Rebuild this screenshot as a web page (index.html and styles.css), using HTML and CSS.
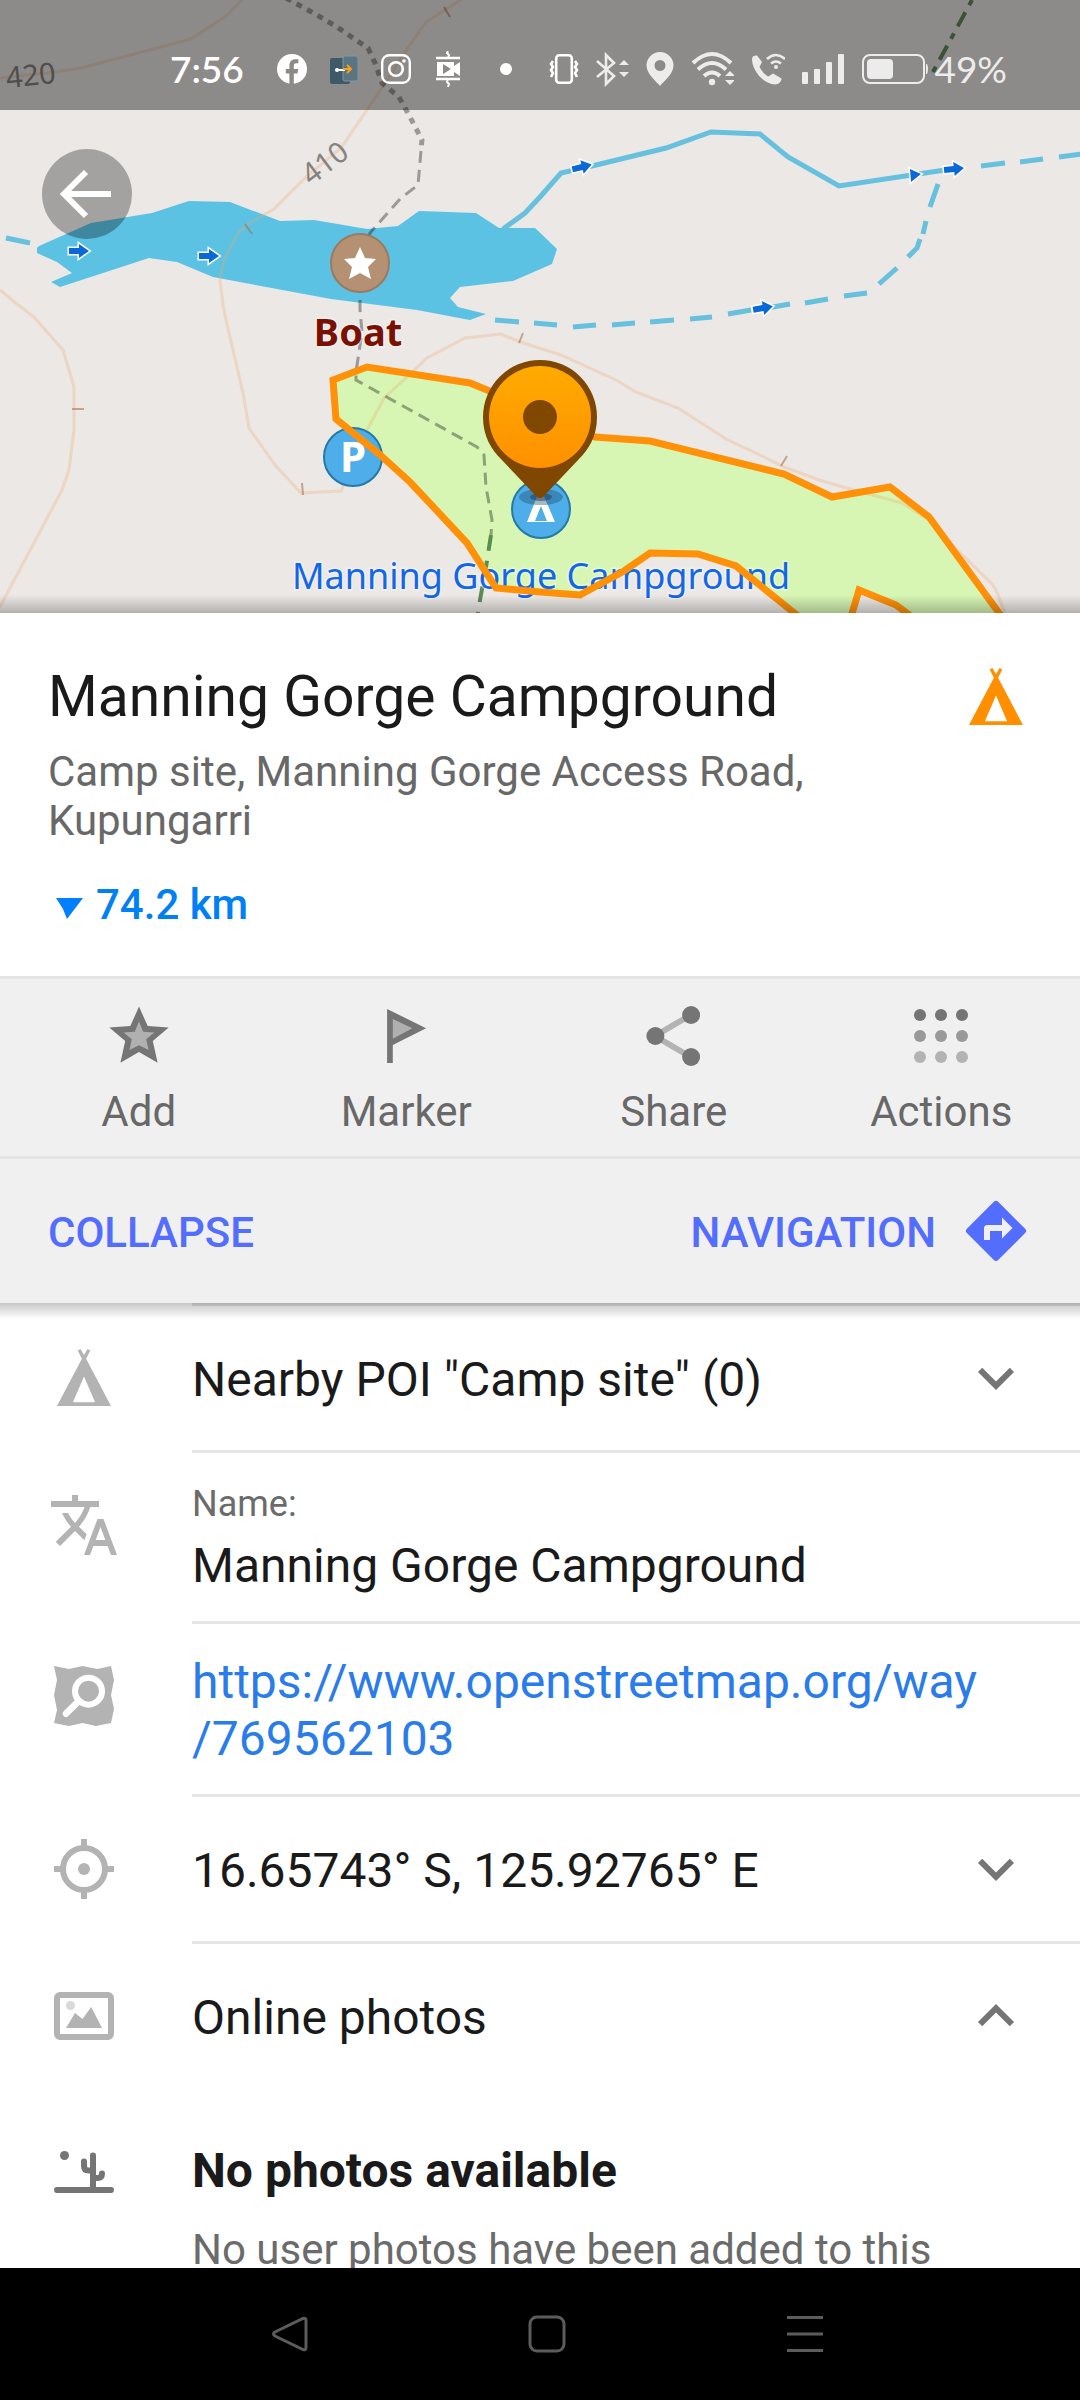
FILE: index.html
```html
<!DOCTYPE html>
<html lang="en">
<head>
<meta charset="utf-8">
<meta name="viewport" content="width=device-width, initial-scale=1">
<title>Manning Gorge Campground</title>
<link rel="stylesheet" href="styles.css">
</head>
<body>
<svg class="defs" aria-hidden="true">
  <defs>
    <symbol id="tent" viewBox="0 0 24 24"><path fill-rule="evenodd" d="M10.8 2.3 12 4.3l1.2-2 .9.5-1.4 2.8L21 21.3H3l8.3-15.7-1.4-2.8zM12 11.5 8.3 20.1h7.4z"/></symbol>
    <symbol id="chevron-down" viewBox="0 0 24 24"><path d="M7.41 8.59 12 13.17l4.59-4.58L18 10l-6 6-6-6z"/></symbol>
    <symbol id="chevron-up" viewBox="0 0 24 24"><path d="M7.41 15.41 12 10.83l4.59 4.58L18 14l-6-6-6 6z"/></symbol>
    <symbol id="flow" viewBox="-13 -9 26 18" overflow="visible"><path class="flow-arrow" d="M-10-3H0v-4L10 0 0 7V3h-10z"/></symbol>
  </defs>
</svg>

<div class="app">
  <header class="map">
    <svg class="map-canvas" viewBox="0 0 1080 613" preserveAspectRatio="xMidYMid slice" role="img" aria-label="Map around Manning Gorge Campground">
      <defs>
        <linearGradient id="pin-fill" x1="0" y1="0" x2="0" y2="1">
          <stop offset="0" stop-color="#ffab00"/><stop offset="1" stop-color="#ff9000"/>
        </linearGradient>
      </defs>
      <rect class="land" width="1080" height="613"/>
      <path class="camp-area" d="M333 380 367 367 470 383 540 412 595 437 650 441 784 474 832 497 890 487 929 517 1000 613V640H920L908 613 896 605 859 590 852 613 846 640H830L798 613 736 566 698 554 650 553 624 571 580 595 540 592 496 588 467 543 410 482 379 454 336 419z"/>
      <path class="lake" d="M37 253 37 248 39 246 91 223 152 213 189 201 230 202 280 221 314 220 367 229 398 226 419 211 476 213 499 228 535 228 557 249 552 264 513 281 460 287 450 298 458 307 486 314 470 320 417 310 331 299 213 277 177 262 149 258 60 287 51 282 72 273 57 262z"/>
      <g class="river">
        <path d="M6 238 30 243"/>
        <path d="M503 229 525 213 540 197 561 173 592 166 666 148 711 132 760 134 788 157 839 186 945 170"/>
        <path d="M981 166 1005 163M1020 162 1043 159M1059 157 1082 154"/>
        <path d="M938 184 930 207M926 221 923 234M920 239 917 248 908 257M897 268 879 284"/>
        <path d="M867 293 844 296M828 299 805 303M790 304 767 308M751 310 728 314M712 317 690 319M674 320 650 322M635 323 612 325M596 325 573 327M557 325 534 323M519 322 495 320"/>
      </g>
      <g class="contour">
        <path d="M0 78 55 72 81 68 134 54 191 39 226 16 242 0"/>
        <path d="M461 0 448 8 426 22 403 55 382 88 341 148 306 177 274 209 248 224 238 233 224 260 220 280 223 305 226 320 243 393 249 428 275 465 301 493 341 491 368 428 384 398 406 378 427 358 465 338 501 334 520 342 561 355 616 380 636 392 678 408 726 439 764 457 784 467 819 480 850 489 902 503 929 520 950 543 991 583 996 590 1005 613"/>
        <path d="M0 290 12 300 34 317 63 350 74 387 74 430 69 470 62 490 0 607"/>
      </g>
      <path class="contour-tick" d="M444 7 450 17M245 224 252 234M302 483 303 495M72 409H84M523 333 519 343M787 456 781 466"/>
      <path class="trail trail-dots" d="M286-2 317 15 337 27 356 40 368 48 375 63 382 83 399 97 410 117 422 140 421 148"/>
      <path class="trail" d="M421 151 418 185 401 198 370 233 360 263 360 310 362 332 356 372 356 380 477 447 484 455 486 487 492 520 491 535"/>
      <path class="track" d="M491 535 486 567 480 600 478 613" stroke-dasharray="16 10"/>
      <path class="track" d="M972 0 933 72" stroke-dasharray="6 8 16 8"/>
      <g class="contour-label">
        <text transform="translate(7 88) rotate(-6)">420</text>
        <text transform="translate(311 186) rotate(-37)">410</text>
      </g>
      <use href="#flow" x="-13" y="-9" width="26" height="18" transform="translate(79 251)"/>
      <use href="#flow" x="-13" y="-9" width="26" height="18" transform="translate(209 256)"/>
      <use href="#flow" x="-13" y="-9" width="26" height="18" transform="translate(582 167) rotate(-14)"/>
      <path class="flow-arrow" d="M910 169 921 174 911 182z"/>
      <use href="#flow" x="-13" y="-9" width="26" height="18" transform="translate(954 169) rotate(-6)"/>
      <use href="#flow" x="-13" y="-9" width="26" height="18" transform="translate(763 308) rotate(-10)"/>

      <circle class="poi-brown" cx="360" cy="263" r="29"/>
      <path fill="#fff" d="M360 247 365 258 376 259 368 267 371 279 360 273 349 279 352 267 344 259 355 258z"/>
      <text class="map-label label-boat" x="358" y="346">Boat</text>
      <circle class="poi-blue" cx="353" cy="457" r="29"/>
      <text class="label-parking" x="353" y="472">P</text>
      <circle class="poi-blue" cx="541" cy="509" r="29"/>
      <path fill="#fff" fill-rule="evenodd" d="M538 494H543L555 522H527zM541 506 535 521H547z"/>
      <text class="map-label label-camp" x="541" y="589">Manning Gorge Campground</text>
      <path class="camp-outline" d="M798 616 736 566 698 554 650 553 624 571 580 595 540 592 496 588 467 543 410 482 379 454 336 419 333 380 367 367 470 383 540 412 595 437 650 441 784 474 832 497 890 487 929 517 1002 617M851 617 859 590 896 605 912 617"/>
      <ellipse cx="541" cy="497" rx="22" ry="8" fill="#1d4c68" opacity=".4"/>
      <ellipse cx="541" cy="497" rx="11" ry="4" fill="#1d3c58" opacity=".5"/>
      <path fill="#804700" d="M540 360a57 57 0 0 1 57 57c0 20-9 33-18 42l-36 38q-3 2-6 0l-36-38c-9-9-18-22-18-42a57 57 0 0 1 57-57z"/>
      <circle cx="540" cy="417" r="51" fill="url(#pin-fill)"/>
      <circle cx="540" cy="417" r="17" fill="#804700"/>
    </svg>

    <div class="status">
      <span class="clock">7:56</span>
      <div class="notices">
        <svg width="30" height="36" viewBox="0 0 30 36"><circle cx="15" cy="18" r="15" fill="#fff"/><path d="M12.4 33V22.5H8.8V18h3.6v-3.2c0-4.4 2.4-6.5 6-6.5h3v4h-2.1c-1.7 0-2.5.8-2.5 2.5V18h4.4l-.7 4.5h-3.7V33z" fill="#8b8a87"/></svg>
        <svg width="30" height="36" viewBox="0 0 30 36"><rect x="1" y="7" width="20" height="26" rx="2" fill="#3e5a69"/><rect x="14" y="5" width="15" height="25" rx="2" fill="#5b7482" stroke="#7f98a5"/><path d="M8 19h8" stroke="#fff" stroke-width="2"/><circle cx="8" cy="19" r="2" fill="#fff"/><path d="M14 18h8m-4-4 4 4-4 4" fill="none" stroke="#f5a21b" stroke-width="2"/></svg>
        <svg width="30" height="36" viewBox="0 0 30 36" fill="none" stroke="#fff"><rect x="1.2" y="4.2" width="27.6" height="27.6" rx="7" stroke-width="2.4"/><circle cx="15" cy="18" r="6.8" stroke-width="2.6"/><circle cx="23" cy="10" r="1.8" fill="#fff" stroke="none"/></svg>
        <svg width="30" height="36" viewBox="0 0 30 36"><path d="M3 7h24M3 28h24" stroke="#fff" stroke-width="2.4"/><path d="m15 0-1 2 2 2-1 3M15 28l-1 3 2 2-1 3" fill="none" stroke="#fff" stroke-width="2"/><path fill="#fff" fill-rule="evenodd" d="M4 11h17v4l6-4v14l-6-4v4H4zm6 2v10l8-5z"/></svg>
        <svg width="30" height="36" viewBox="0 0 30 36"><circle cx="21" cy="18" r="6" fill="#fff"/></svg>
      </div>
      <div class="signals">
        <svg width="31" height="36" viewBox="0 0 31 36" fill="none" stroke="#fff"><rect x="8.2" y="4.2" width="15.600" height="27.600" rx="3" stroke-width="2.600"/><path d="m5 10-2 3 2 3-2 3 2 3-2 4M27 10l2 3-2 3 2 3-2 3 2 4" stroke-width="2.600"/></svg>
        <svg width="33" height="36" viewBox="0 0 33 36"><path d="m1 10 17 15-8 8V4l8 8L1 26" fill="none" stroke="#ececec" stroke-width="2.600"/><path d="m23 14 5-5 5 5zM23 21l5 5 5-5z" fill="#ececec"/></svg>
        <svg width="28" height="36" viewBox="0 0 28 36"><path fill="#ececec" fill-rule="evenodd" d="M14 1a13.500 13.500 0 0 1 13.500 13.500C27.500 23 18 30 14 35 10 30 .5 23 .5 14.500A13.500 13.500 0 0 1 14 1zm0 8a5.500 5.500 0 1 0 0 11 5.500 5.500 0 1 0 0-11z"/></svg>
        <svg width="43" height="36" viewBox="0 0 43 36"><path d="M2 12q19-18 38 0M7 18.500q14-13 28 0M13 25q8-7 16 0" fill="none" stroke="#ececec" stroke-width="4"/><circle cx="21" cy="31" r="3.200" fill="#ececec"/><path d="m34 25 5-5 5 5zM34 29l5 5 5-5z" fill="#ececec"/></svg>
        <svg width="34" height="36" viewBox="0 0 34 36"><path fill="#ececec" d="M1 8c0-3 3-4 5-3.500l5 6.500-2.500 5c2 4 5 7.500 9 9.500l4.500-3 8.500 5c0 3-3 6-6.500 6C12 33 1 19 1 8z"/><path d="M16 8q9-8 18 0M20 12.500q5-4 10 0" fill="none" stroke="#ececec" stroke-width="2.600"/><circle cx="25" cy="16" r="2" fill="#ececec"/></svg>
        <svg width="43" height="36" viewBox="0 0 43 36" fill="#ececec"><rect y="21" width="6" height="12" rx="1"/><rect x="12" y="18" width="6" height="15" rx="1"/><rect x="24" y="11" width="6" height="22" rx="1"/><rect x="36" y="3" width="6" height="30" rx="1"/></svg>
        <svg width="67" height="36" viewBox="0 0 67 36"><rect x="1" y="4" width="61" height="28" rx="7" fill="none" stroke="#ececec" stroke-width="2"/><rect x="5" y="8" width="26" height="20" rx="4" fill="#ececec"/><path d="M64 13h1q2 5 0 10h-1z" fill="#ececec"/></svg>
      </div>
      <span class="charge">49%</span>
    </div>

    <button class="back" aria-label="Back">
      <svg width="60" height="60" viewBox="0 0 60 60" fill="none" stroke="#fff" stroke-width="6"><path d="M54 30H9M29 8 7 30l22 22"/></svg>
    </button>
  </header>

  <section class="summary">
    <div class="summary-text">
      <h1>Manning Gorge Campground</h1>
      <p class="address">Camp site, Manning Gorge Access Road, Kupungarri</p>
      <p class="distance">
        <svg width="36" height="30" viewBox="0 0 36 30" fill="#0080ff"><path d="M8 8h27L19 29l-4-10z"/></svg>
        74.2 km
      </p>
    </div>
    <svg class="icon icon-orange"><use href="#tent"/></svg>
  </section>

  <nav class="actions">
    <button class="action">
      <svg class="icon" viewBox="0 0 24 24"><path fill="#757575" d="m12 2.200 2.900 6.500 7 .5-5.300 4.500 1.600 7.200-6.200-3.600-6.200 3.600 1.600-7.200-5.300-4.500 7-.5z"/><path fill="#b0b0b0" d="m12 7.200 1.400 3.400 3.700.2-2.700 2.300.8 3.600-3.200-1.600-3.200 1.600.8-3.600-2.700-2.300 3.700-.2z"/></svg>
      <span>Add</span>
    </button>
    <button class="action">
      <svg class="icon" viewBox="0 0 24 24"><path fill="#757575" d="M5.700 3v18h1.900v-6l11.100-5.600z"/><path fill="#b0b0b0" d="M7.600 6.300v6.600l6.500-3.500z"/></svg>
      <span>Marker</span>
    </button>
    <button class="action">
      <svg class="icon" viewBox="0 0 24 24"><path d="m17.600 5-12 7 12 7" fill="none" stroke="#b3b3b3" stroke-width="2"/><g fill="#757575"><circle cx="17.700" cy="5" r="3"/><circle cx="5.800" cy="12" r="3"/><circle cx="17.700" cy="19" r="3"/></g></svg>
      <span>Share</span>
    </button>
    <button class="action">
      <svg class="icon" viewBox="0 0 24 24"><g fill="#757575"><circle cx="5" cy="5" r="2"/><circle cx="12" cy="5" r="2"/><circle cx="19" cy="5" r="2"/></g><g fill="#999"><circle cx="5" cy="12" r="2"/><circle cx="12" cy="12" r="2"/><circle cx="19" cy="12" r="2"/></g><g fill="#b3b3b3"><circle cx="5" cy="19" r="2"/><circle cx="12" cy="19" r="2"/><circle cx="19" cy="19" r="2"/></g></svg>
      <span>Actions</span>
    </button>
  </nav>

  <div class="controls">
    <button class="text-button"><span>COLLAPSE</span></button>
    <button class="text-button">
      <span>NAVIGATION</span>
      <svg class="icon" viewBox="0 0 24 24" fill="#536dfe"><path d="M21.710 11.290l-9-9a.996.996 0 0 0-1.410 0l-9 9a.996.996 0 0 0 0 1.410l9 9c.39.39 1.020.39 1.410 0l9-9a.996.996 0 0 0 0-1.410zM14 14.500V12h-4v3H8v-4c0-.55.45-1 1-1h5V7.500l3.500 3.500-3.500 3.500z"/></svg>
    </button>
  </div>

  <main class="details">
    <button class="row" aria-expanded="false">
      <svg class="icon"><use href="#tent"/></svg>
      <span class="cell cell-single"><span class="value">Nearby POI "Camp site" (0)</span><svg class="icon chevron"><use href="#chevron-down"/></svg></span>
    </button>
    <div class="row">
      <svg class="icon" viewBox="0 0 24 24"><path d="M12.870 15.070l-2.540-2.510.03-.03c1.740-1.940 2.980-4.170 3.710-6.530H17V4h-7V2H8v2H1v1.990h11.170C11.500 7.920 10.440 9.750 9 11.350 8.070 10.320 7.300 9.190 6.690 8h-2c.73 1.630 1.730 3.170 2.980 4.560l-5.090 5.020L4 19l5-5 3.110 3.110.76-2.040zM18.500 10h-2L12 22h2l1.120-3h4.750L21 22h2l-4.500-12zm-2.620 7l1.620-4.330L19.120 17h-3.240z"/></svg>
      <div class="cell cell-stack"><span class="caption">Name:</span><span class="value">Manning Gorge Campground</span></div>
    </div>
    <div class="row">
      <svg class="icon" viewBox="0 0 24 24"><path d="M2 2l5 1 4.500-1 5 1L21 2l1 4.700-1 5 1 4.600-1 4.700-5 1-4.500-1-4.500 1-5-1 1-4.300-1-5 1-5z"/><g fill="none" stroke="#fff"><circle cx="13.500" cy="10.400" r="4.500" stroke-width="2"/><path d="m10.300 13.600-4.300 4.300" stroke-width="2.200" stroke-linecap="round"/></g></svg>
      <div class="cell"><a class="value" href="https://www.openstreetmap.org/way/769562103">https://www.openstreetmap.org/way<wbr>/769562103</a></div>
    </div>
    <button class="row" aria-expanded="false">
      <svg class="icon" viewBox="0 0 24 24"><circle cx="12" cy="12" r="7" fill="none" stroke="#b3b3b3" stroke-width="2"/><circle cx="12" cy="12" r="2"/><path d="M11 2h2v3h-2zM11 19h2v3h-2zM2 11h3v2H2zM19 11h3v2h-3z"/></svg>
      <span class="cell cell-single"><span class="value">16.65743° S, 125.92765° E</span><svg class="icon chevron"><use href="#chevron-down"/></svg></span>
    </button>
    <button class="row" aria-expanded="true">
      <svg class="icon" viewBox="0 0 24 24"><rect x="3" y="5" width="18" height="14" rx="1" fill="none" stroke="#b3b3b3" stroke-width="2"/><circle cx="7.500" cy="8.500" r="1.500" opacity=".5"/><path d="m6 16 3-5 2.500 2L14.400 9l3.600 7z"/></svg>
      <span class="cell cell-single cell-open"><span class="value">Online photos</span><svg class="icon chevron"><use href="#chevron-up"/></svg></span>
    </button>
    <div class="row empty">
      <svg class="icon" viewBox="0 0 24 24" fill="none" stroke="#757575" stroke-width="2" stroke-linecap="round"><path d="M3 18h18M15 17.500v-11M12 8.500v1.500q0 1.500 1.500 1.500H15M18 12.500q0 1.500-1.500 1.500H15"/><circle cx="5.500" cy="6.500" r="1.500" fill="#757575" stroke="none"/></svg>
      <div class="empty-text">
        <h2>No photos available</h2>
        <p>No user photos have been added to this</p>
      </div>
    </div>
  </main>

  <footer class="system-nav">
    <button aria-label="System back"><svg width="40" height="40" viewBox="0 0 40 40"><path d="M34 4.500q3-1 3 2v27q0 3-3 2L6 22q-3-2 0-4z"/></svg></button>
    <button aria-label="Home"><svg width="40" height="40" viewBox="0 0 40 40"><rect x="3" y="3" width="34" height="34" rx="7"/></svg></button>
    <button aria-label="Recent apps"><svg width="40" height="40" viewBox="0 0 40 40"><path d="M2 3.500h36M2 20h36M2 36.500h36"/></svg></button>
  </footer>
</div>
</body>
</html>
```
FILE: styles.css
```css
* {
  box-sizing: border-box;
}

body {
  margin: 0;
  background: #fff;
  color: #1a1a1a;
  font-family: Roboto, "Liberation Sans", sans-serif;
}

h1,
h2,
p {
  margin: 0;
}

button {
  margin: 0;
  padding: 0;
  border: 0;
  background: none;
  color: inherit;
  font: inherit;
  text-align: left;
  cursor: pointer;
}

svg {
  display: block;
  flex: none;
}

.defs {
  position: absolute;
  width: 0;
  height: 0;
}

.app {
  display: flex;
  flex-direction: column;
  height: 100vh;
}

.icon {
  width: 72px;
  height: 72px;
}

.icon-orange {
  fill: #ff8f00;
}

/* Map */
.map {
  position: relative;
  flex: none;
}

.map::after {
  content: "";
  position: absolute;
  right: 0;
  bottom: 0;
  left: 0;
  height: 18px;
  background: linear-gradient(rgba(0, 0, 0, 0), rgba(0, 0, 0, 0.24));
}

.map-canvas {
  width: 100%;
  height: 613px;
}

.land { fill: #ebe8e5; }
.lake { fill: #5bc2e4; }
.camp-area { fill: #d7f6b4; }

.river {
  fill: none;
  stroke: #66c0de;
  stroke-width: 5;
}

.contour {
  fill: none;
  stroke: #f0a468;
  stroke-opacity: 0.28;
  stroke-width: 3;
}

.contour-tick {
  stroke: #a5673f;
  stroke-opacity: 0.55;
  stroke-width: 2;
}

.trail {
  fill: none;
  stroke: #000;
  stroke-opacity: 0.34;
  stroke-width: 3;
  stroke-dasharray: 12 7;
}

.trail-dots {
  stroke-width: 5;
  stroke-dasharray: 6 6;
}

.track {
  fill: none;
  stroke: #2f6b2b;
  stroke-opacity: 0.75;
  stroke-width: 4;
}

.contour-label {
  fill: #858381;
  font: 29px "Noto Sans", sans-serif;
}

.flow-arrow {
  fill: #0a69d6;
  stroke: #fff;
  stroke-width: 3;
  paint-order: stroke;
}

.poi-brown {
  fill: #b59173;
  stroke: #9d7960;
  stroke-width: 2;
}

.poi-blue {
  fill: #4eaee9;
  stroke: #2479a6;
  stroke-width: 2;
}

.map-label {
  font-family: "Noto Sans", sans-serif;
  text-anchor: middle;
  stroke: #fff;
  stroke-opacity: 0.4;
  stroke-width: 3;
  paint-order: stroke;
}

.label-boat {
  fill: #7a1002;
  font-size: 38px;
  font-weight: 700;
}

.label-camp {
  fill: #1266e8;
  font-size: 36px;
}

.label-parking {
  fill: #fff;
  font: 700 42px "Noto Sans", sans-serif;
  text-anchor: middle;
}

.camp-outline {
  fill: none;
  stroke: #ff9108;
  stroke-width: 7;
}

/* Status bar */
.status {
  position: absolute;
  top: 0;
  right: 0;
  left: 0;
  display: flex;
  align-items: center;
  height: 110px;
  padding: 28px 73px 0 170px;
  background: rgba(0, 0, 0, 0.4);
  color: #fff;
  font: 37px/36px Lato, sans-serif;
}

.clock {
  font-weight: 600;
}

.notices {
  display: flex;
  gap: 22px;
  margin-left: 33px;
}

.signals {
  display: flex;
  gap: 17px;
  margin-right: 5px;
  margin-left: auto;
}

.charge {
  color: #ececec;
}

.back {
  position: absolute;
  top: 149px;
  left: 42px;
  display: grid;
  place-items: center;
  width: 90px;
  height: 90px;
  border-radius: 50%;
  background: rgba(0, 0, 0, 0.3);
}

/* Place summary */
.summary {
  display: flex;
  flex: none;
  gap: 72px;
  padding: 48px 48px 47px;
}

.summary-text {
  flex: 1;
  padding-top: 3px;
}

.summary h1 {
  font-size: 57px;
  font-weight: 400;
  line-height: 66px;
}

.address {
  margin-top: 17px;
  color: #686868;
  font-size: 42px;
  line-height: 49px;
}

.distance {
  display: flex;
  align-items: center;
  gap: 12px;
  margin-top: 35px;
  color: #0080f5;
  font-size: 42px;
  font-weight: 500;
  line-height: 49px;
}

/* Action buttons */
.actions {
  display: grid;
  flex: none;
  grid-template-columns: repeat(4, 1fr);
  padding: 0 5px;
  border-top: 3px solid #e5e5e5;
  background: #f0f0f0;
}

.action {
  display: flex;
  flex-direction: column;
  align-items: center;
  gap: 15px;
  padding: 21px 0 20px;
  color: #686868;
  font-size: 42px;
  line-height: 49px;
}

.controls {
  position: relative;
  z-index: 1;
  display: flex;
  flex: none;
  justify-content: space-between;
  height: 147px;
  padding: 0 48px;
  border-top: 3px solid #e5e5e5;
  background: #f0f0f0;
}

.controls::after {
  content: "";
  position: absolute;
  top: 100%;
  right: 0;
  left: 0;
  height: 16px;
  background: linear-gradient(rgba(0, 0, 0, 0.22), rgba(0, 0, 0, 0));
}

.text-button {
  display: flex;
  align-items: center;
  gap: 24px;
  color: #536dfe;
  font-size: 42px;
  font-weight: 500;
}

.text-button span {
  padding-top: 3px;
}

/* Detail rows */
.details {
  flex: 1;
  min-height: 0;
  overflow: hidden;
}

.row {
  display: flex;
  align-items: flex-start;
  gap: 72px;
  width: 100%;
  padding-left: 48px;
  fill: #b3b3b3;
}

.row > .icon {
  margin-top: 36px;
}

.row:first-child > .icon {
  margin-top: 39px;
}

.cell {
  flex: 1;
  padding: 29px 48px 27px 0;
  border-bottom: 3px solid #e5e5e5;
}

.row:first-child .cell {
  border-top: 3px solid #e5e5e5;
}

.cell-stack {
  display: flex;
  flex-direction: column;
  gap: 11px;
}

.cell-single {
  display: flex;
  align-items: center;
  justify-content: space-between;
  padding: 36px 48px 36px 0;
}

.cell-single .value {
  padding-top: 3px;
}

.cell-open {
  border-bottom: 0;
}

.caption {
  color: #6b6b6b;
  font-size: 36px;
  line-height: 44px;
}

.value {
  font-size: 48px;
  line-height: 57px;
}

.chevron {
  fill: #757575;
}

a.value {
  display: block;
  color: #2a7cea;
  text-decoration: none;
}

.row.empty > .icon {
  margin-top: 48px;
}

.empty-text {
  flex: 1;
  padding: 54px 48px 48px 0;
}

.empty-text h2 {
  font-size: 48px;
  font-weight: 700;
  line-height: 57px;
}

.empty-text p {
  margin-top: 26px;
  color: #6b6b6b;
  font-size: 42px;
  line-height: 49px;
}

/* System navigation */
.system-nav {
  display: flex;
  flex: none;
  align-items: center;
  justify-content: center;
  gap: 218px;
  height: 132px;
  padding-left: 14px;
  background: #000;
}

.system-nav svg {
  fill: none;
  stroke: #5c5c5c;
  stroke-width: 3;
}
```
